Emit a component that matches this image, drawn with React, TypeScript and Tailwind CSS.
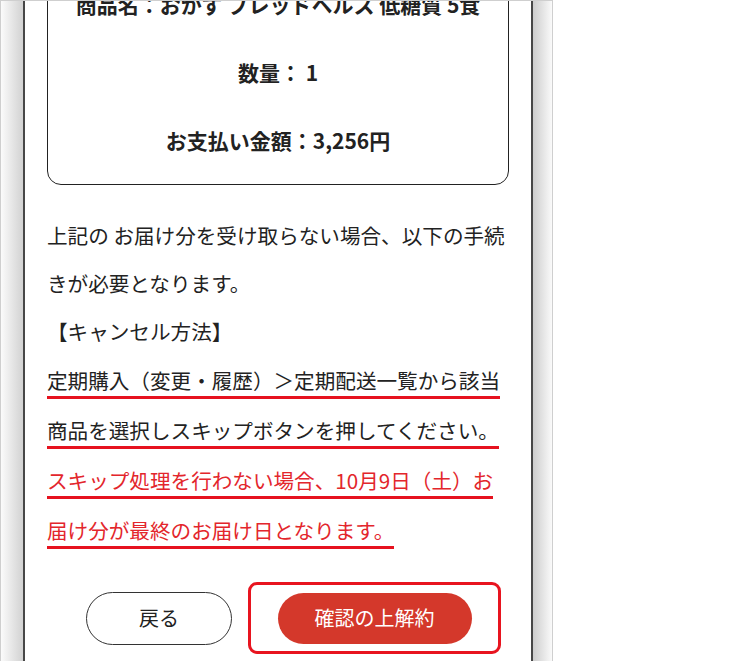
import React from "react";

export default function App() {
  return (
    <div className="w-[750px] h-[661px] bg-white overflow-hidden font-['Noto_Sans_CJK_JP','Noto_Sans',sans-serif] text-[#222]">
      <div className="w-[553px] h-[661px] flex border-t border-l border-r border-[#cfcfcf]">
        <div className="w-[22px] h-full bg-gradient-to-r from-[#fbfbfb] to-[#d2d2d2]" />
        <div className="w-[2px] h-full bg-[#474747]" />
        <main className="w-[506px] h-full overflow-hidden px-[22px]">
          <section className="-mt-[42px] border-[1.5px] border-[#222] rounded-[14px] pt-[10px] pb-[10px] text-center font-bold text-[21px] leading-[68px]">
            <p>商品名：おかず ブレッドヘルス 低糖質 5食</p>
            <p>数量： 1</p>
            <p>お支払い金額：3,256円</p>
          </section>

          <div className="mt-[26px] text-[20.6px] leading-[48px] whitespace-nowrap">
            <p>上記の&nbsp;お届け分を受け取らない場合、以下の手続</p>
            <p>きが必要となります。</p>
            <p>【キャンセル方法】</p>
          </div>

          <div className="text-[20.6px] leading-[50px]">
            <p>
              <span className="border-b-[3px] border-[#e6121f] pb-[1px]">
                定期購入（変更・履歴）＞定期配送一覧から該当商品を選択しスキップボタンを押してください。
              </span>
            </p>
            <p className="text-[#e3262c]">
              <span className="border-b-[3px] border-[#e6121f] pb-[1px]">
                スキップ処理を行わない場合、10月9日（土）お届け分が最終のお届け日となります。
              </span>
            </p>
          </div>

          <div className="mt-[27px] flex items-center pl-[39px] gap-[16px]">
            <button className="w-[146px] h-[53px] rounded-full border-[1.5px] border-[#333] bg-white text-[20px] text-[#222] flex items-center justify-center">
              戻る
            </button>
            <div className="w-[253px] h-[72px] border-[3px] border-[#e8141f] rounded-[9px] flex items-center justify-center">
              <button className="w-[194px] h-[51px] rounded-full bg-[#d4382b] text-white text-[20px] flex items-center justify-center">
                確認の上解約
              </button>
            </div>
          </div>
        </main>
        <div className="w-[2px] h-full bg-[#474747]" />
        <div className="w-[19px] h-full bg-gradient-to-r from-[#cdcdcd] to-[#fafafa]" />
      </div>
    </div>
  );
}
